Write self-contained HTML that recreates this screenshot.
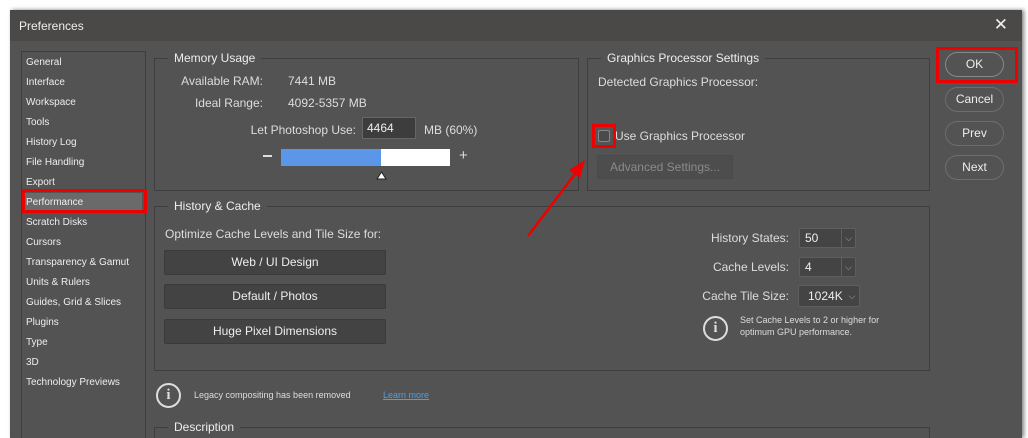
<!DOCTYPE html>
<html style="overflow:hidden"><head><style>
*{box-sizing:border-box;margin:0;padding:0}
html,body{width:1028px;height:438px;overflow:hidden}
body{background:#fff;position:relative;font-family:"Liberation Sans",sans-serif;color:#ddd}
.dlg{position:absolute;left:10px;top:10px;width:1012px;height:428px;background:#535353;box-shadow:2px 0 4px rgba(0,0,0,.5);overflow:hidden}
.title{position:absolute;left:0;top:0;width:100%;height:31px;background:#4a4948;font-size:12px;color:#eee;padding:9px 0 0 9px}
.x{position:absolute;right:14px;top:5px;font-size:17px;color:#eee}
.abs{position:absolute}
.side{left:11px;top:41px;width:125px;height:387px;border:1px solid #3e3e3e;border-bottom:none}
.side div{position:absolute;left:4px;font-size:10px;color:#eee}
.box{position:absolute;border:1px solid #3e3e3e}
.lg{position:absolute;background:#535353;padding:0 6px;font-size:12px;color:#eee;top:-8px;left:13px}
.t{position:absolute;font-size:12px;color:#ddd;white-space:nowrap}
.btn{position:absolute;border:1.5px solid #888;border-radius:13px;width:59px;height:25px;text-align:center;font-size:12px;line-height:22px;color:#eee}
.pb{position:absolute;left:9px;width:222px;height:25px;background:#434343;border:1px solid #3a3a3a;border-radius:2px;text-align:center;font-size:12px;line-height:23px;color:#eee}
.sel{position:absolute;height:20px;background:#444;border:1px solid #5e5e5e;border-radius:2px;font-size:12px;color:#eee;line-height:18px;padding-left:5px}
.sel i{position:absolute;right:0;top:0;width:14px;height:18px;border-left:1px solid #5e5e5e;font-style:normal;font-size:9px;text-align:center;color:#aaa}
.red{position:absolute;border:3px solid #e00}
.info{position:absolute;width:25px;height:25px;border:2px solid #ddd;border-radius:50%;text-align:center;font-size:15px;line-height:21px;color:#ddd;font-family:"Liberation Serif",serif;font-weight:bold}
</style></head><body>
<div class="dlg">
<div class="title">Preferences<span class="x">✕</span></div>
<div class="abs side">
<div style="top:5px">General</div><div style="top:25px">Interface</div><div style="top:45px">Workspace</div><div style="top:65px">Tools</div><div style="top:85px">History Log</div><div style="top:105px">File Handling</div><div style="top:125px">Export</div>
<div style="top:141px;left:1px;width:119px;height:19px;background:#6a6a6a"></div>
<div style="top:145px">Performance</div><div style="top:165px">Scratch Disks</div><div style="top:185px">Cursors</div><div style="top:205px">Transparency &amp; Gamut</div><div style="top:225px">Units &amp; Rulers</div><div style="top:245px">Guides, Grid &amp; Slices</div><div style="top:265px">Plugins</div><div style="top:285px">Type</div><div style="top:305px">3D</div><div style="top:325px">Technology Previews</div>
</div>
<div class="red" style="left:12px;top:179px;width:125px;height:24px"></div>

<div class="box" style="left:144px;top:48px;width:425px;height:133px"><span class="lg">Memory Usage</span>
<span class="t" style="right:315px;top:15px">Available RAM:</span><span class="t" style="left:133px;top:15px">7441 MB</span>
<span class="t" style="right:315px;top:37px">Ideal Range:</span><span class="t" style="left:133px;top:37px">4092-5357 MB</span>
<span class="t" style="right:222px;top:64px">Let Photoshop Use:</span>
<div class="abs" style="left:207px;top:58px;width:54px;height:22px;background:#3d3d3d;border:1px solid #666;font-size:12px;color:#eee;padding:3px 4px">4464</div>
<span class="t" style="left:269px;top:64px">MB (60%)</span>
<div class="abs" style="left:108px;top:96px;width:9px;height:2px;background:#ddd"></div>
<div class="abs" style="left:126px;top:90px;width:169px;height:17px;background:#fff"><div style="width:100px;height:17px;background:#5b96e8"></div></div>
<span class="t" style="left:304px;top:88px;font-size:15px">+</span>
<svg class="abs" style="left:221px;top:111px" width="11" height="10"><path d="M1 9 L5.5 2 L10 9 Z" fill="#fff" stroke="#222" stroke-width="1"/></svg>
</div>

<div class="box" style="left:577px;top:48px;width:343px;height:133px"><span class="lg" style="left:13px">Graphics Processor Settings</span>
<span class="t" style="left:10px;top:16px">Detected Graphics Processor:</span>
<div class="abs" style="left:10px;top:71px;width:12px;height:12px;border:1px solid #888;border-radius:2px;background:#4a4a4a"></div>
<span class="t" style="left:27px;top:70px">Use Graphics Processor</span>
<div class="abs" style="left:9px;top:96px;width:136px;height:24px;background:#4d4d4d;border:1px solid #4a4a4a;border-radius:2px;font-size:12px;color:#8a8a8a;text-align:center;line-height:22px">Advanced Settings...</div>
</div>
<div class="red" style="left:582px;top:114px;width:24px;height:24px"></div>

<div class="box" style="left:144px;top:196px;width:776px;height:165px"><span class="lg">History &amp; Cache</span>
<span class="t" style="left:10px;top:20px">Optimize Cache Levels and Tile Size for:</span>
<div class="pb" style="top:43px">Web / UI Design</div>
<div class="pb" style="top:77px">Default / Photos</div>
<div class="pb" style="top:112px">Huge Pixel Dimensions</div>
<span class="t" style="right:140px;top:24px">History States:</span>
<div class="sel" style="left:644px;top:21px;width:57px">50<i>⌵</i></div>
<span class="t" style="right:140px;top:53px">Cache Levels:</span>
<div class="sel" style="left:644px;top:50px;width:57px">4<i>⌵</i></div>
<span class="t" style="right:140px;top:82px">Cache Tile Size:</span>
<div class="sel" style="left:643px;top:78px;width:62px;height:22px;line-height:20px;padding-left:9px">1024K<i style="border:none;height:20px">⌵</i></div>
<div class="info" style="left:548px;top:109px">i</div>
<span class="t" style="left:585px;top:107px;font-size:9px;line-height:12px;color:#ddd">Set Cache Levels to 2 or higher for<br>optimum GPU performance.</span>
</div>

<div class="info" style="left:146px;top:373px">i</div>
<span class="t" style="left:184px;top:380px;font-size:9px">Legacy compositing has been removed</span>
<span class="t" style="left:373px;top:380px;font-size:9px;color:#4a9fea;text-decoration:underline">Learn more</span>

<div class="box" style="left:144px;top:417px;width:776px;height:11px;border-bottom:none"><span class="lg">Description</span></div>

<div class="btn" style="left:935px;top:42px">OK</div>
<div class="btn" style="left:935px;top:77px;border-color:#6e6e6e">Cancel</div>
<div class="btn" style="left:935px;top:111px;border-color:#6e6e6e">Prev</div>
<div class="btn" style="left:935px;top:145px;border-color:#6e6e6e">Next</div>
<div class="red" style="left:926px;top:37px;width:82px;height:36px"></div>

<svg class="abs" style="left:0;top:0" width="1012" height="428">
<line x1="518" y1="226" x2="568" y2="160" stroke="#e00" stroke-width="2.5"/>
<polygon points="575,150 559,160 570,168" fill="#e00"/>
</svg>
</div>
</body></html>
